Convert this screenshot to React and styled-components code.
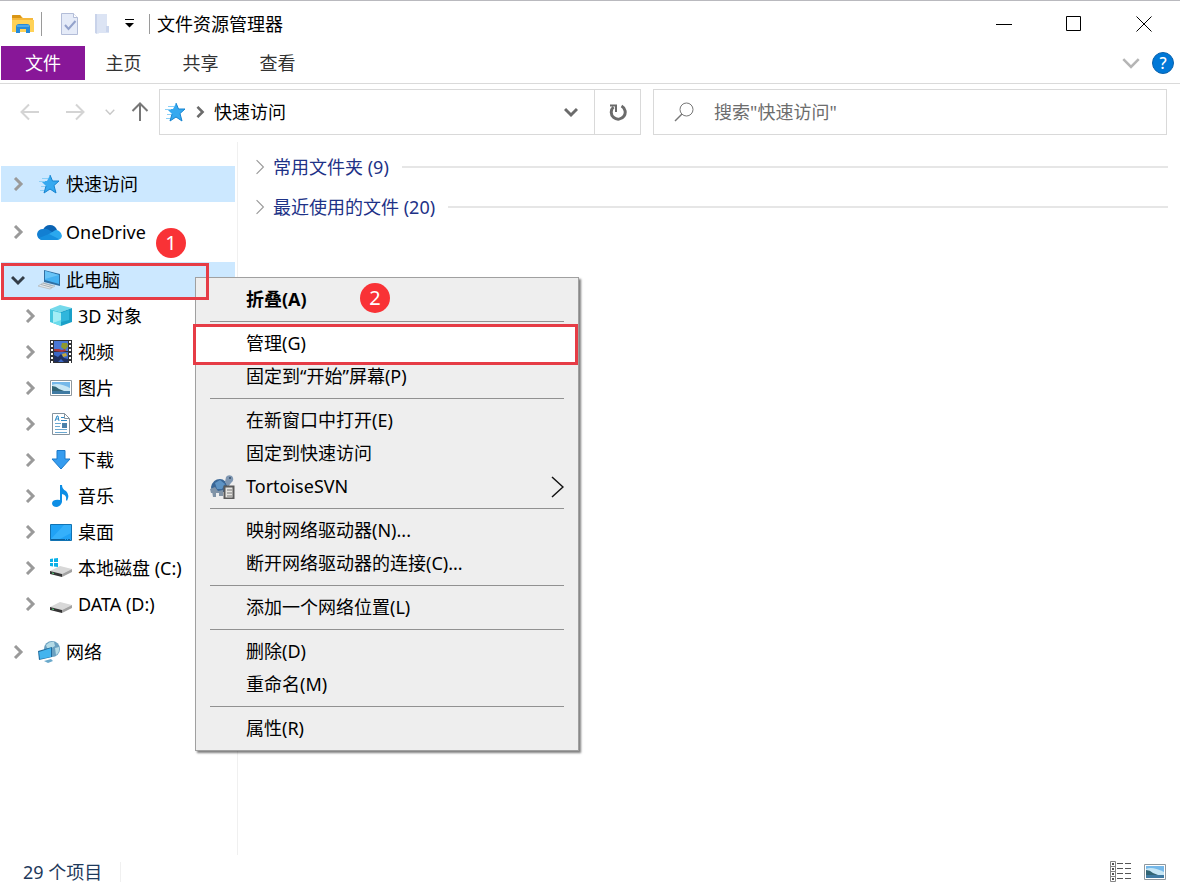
import React from "react";
import styled, { createGlobalStyle } from "styled-components";

const GlobalStyle = createGlobalStyle`
  * {
    box-sizing: border-box;
  }
  body {
    margin: 0;
    background: #fff;
  }
  body,
  button,
  input {
    font-family: "Noto Sans", "Noto Sans CJK SC", sans-serif;
    font-size: 18px;
    color: #000;
  }
  button {
    padding: 0;
    border: 0;
    background: none;
  }
  svg {
    display: block;
    flex: none;
  }
`;

const Window = styled.div`
  position: relative;
  display: flex;
  flex-direction: column;
  min-height: 100vh;
`;

const TitleBar = styled.header`
  display: flex;
  align-items: center;
  height: 46px;
  padding: 0 1px 0 11px;
  border-top: 1px solid #b9b9be;
`;

const QuickAccess = styled.div`
  display: flex;
  align-items: center;
  gap: 14px;
  margin-left: 6px;
  padding-left: 18px;
  border-left: 1px solid #9a9a9a;
`;

const Divider = styled.span`
  width: 1px;
  height: 20px;
  background: #9a9a9a;
`;

const Title = styled.h1`
  flex: 1;
  margin: 0 0 0 7px;
  font-size: 18px;
  line-height: 24px;
  font-weight: 400;
`;

const WindowButton = styled.button`
  display: flex;
  align-items: center;
  justify-content: center;
  width: 70px;
  height: 45px;
`;

const Tabs = styled.nav`
  display: flex;
  align-items: center;
  padding: 0 6px 3px 1px;
  border-bottom: 1px solid #dadada;
`;

const Tab = styled.button`
  width: ${p => (p.$file ? 84 : 77)}px;
  height: 34px;
  line-height: 34px;
  color: ${p => (p.$file ? "#fff" : "#333")};
  background: ${p => (p.$file ? "#881798" : "transparent")};
`;

const RibbonTools = styled.div`
  display: flex;
  align-items: center;
  gap: 12px;
  margin-left: auto;
`;

const HelpButton = styled.button`
  width: 22px;
  height: 22px;
  border-radius: 50%;
  background: #0078d7;
  border: 1px solid #0a62ad;
  color: #fff;
  font-size: 16px;
  line-height: 20px;
  font-weight: 500;
`;

const AddressRow = styled.div`
  display: flex;
  padding: 5px 13px 7px 0;
`;

const History = styled.div`
  display: flex;
  flex: none;
  align-items: center;
  gap: 20px;
  width: 159px;
  padding-left: 20px;
`;

const HistoryGroup = styled.div`
  display: flex;
  align-items: center;
  gap: ${p => p.$gap}px;
`;

const Field = styled.div`
  display: flex;
  flex: ${p => p.$grow} 1 0;
  align-items: center;
  min-width: 0;
  height: 46px;
  border: 1px solid #d9d9d9;
  & + & {
    margin-left: 12px;
  }
`;

const Crumb = styled.button`
  display: flex;
  align-items: center;
  flex: 1;
  gap: 8px;
  padding-left: 4px;
  line-height: 44px;
`;

const FieldButton = styled.button`
  display: flex;
  align-items: center;
  justify-content: center;
  width: 46px;
  height: 44px;
  border-left: ${p => (p.$line ? "1px solid #d9d9d9" : "0")};
`;

const SearchLabel = styled.label`
  display: flex;
  align-items: center;
  width: 100%;
  gap: 20px;
  padding-left: 20px;
`;

const SearchInput = styled.input`
  flex: 1;
  min-width: 0;
  height: 44px;
  padding: 0;
  border: 0;
  outline: 0;
  background: none;
  &::placeholder {
    color: #6d6d6d;
    opacity: 1;
  }
`;

const Body = styled.div`
  display: flex;
  flex: 1;
`;

const Sidebar = styled.nav`
  flex: none;
  width: 238px;
  padding: 24px 2px 0 1px;
  border-right: 1px solid #f0f0f0;
`;

const TreeGroup = styled.div`
  margin-bottom: 12px;
`;

const TreeRow = styled.div`
  position: relative;
  background: ${p => (p.$active ? "#cce8ff" : "transparent")};
`;

const TreeButton = styled.button`
  display: flex;
  align-items: center;
  width: 100%;
  height: 36px;
  padding-left: ${p => (p.$child ? 22 : 10)}px;
  gap: 5px;
  line-height: 36px;
  text-align: left;
  white-space: nowrap;
`;

const TreeIcon = styled.span`
  display: flex;
  justify-content: center;
  width: 24px;
  margin-left: 7px;
`;

const Content = styled.main`
  flex: 1;
  min-width: 0;
  padding: 5px 12px 0 14px;
`;

const GroupHeader = styled.button`
  display: flex;
  align-items: center;
  width: 100%;
  height: 40px;
  gap: 5px;
  color: #1e3287;
  line-height: 40px;
  &::after {
    content: "";
    flex: 1;
    height: 2px;
    margin-left: 8px;
    background: #e6e6e6;
  }
`;

const Menu = styled.div`
  position: absolute;
  left: 195px;
  top: 277px;
  z-index: 1;
  width: 384px;
  padding: 5px 0;
  background: #eee;
  border: 1px solid #a0a0a0;
  box-shadow: 2px 2px 2px rgba(0, 0, 0, 0.5);
`;

const MenuRow = styled.div`
  position: relative;
`;

const MenuItem = styled.button`
  display: grid;
  grid-template-columns: 24px 1fr auto;
  align-items: center;
  column-gap: 12px;
  width: 100%;
  height: 33px;
  padding: 0 14px;
  text-align: left;
  line-height: 33px;
  font-weight: ${p => (p.$bold ? 700 : 400)};
`;

const MenuLine = styled.hr`
  height: 1px;
  margin: 5px 14px;
  border: 0;
  background: #919191;
`;

const Outline = styled.span`
  position: absolute;
  inset: ${p => p.$inset};
  z-index: 2;
  border: 3px solid #e63c46;
  background: ${p => p.$fill || "transparent"};
  pointer-events: none;
`;

const MenuText = styled.span`
  position: relative;
  z-index: 3;
`;

const Badge = styled.span`
  position: absolute;
  left: ${p => p.$left}px;
  top: ${p => p.$top}px;
  z-index: 3;
  width: 30px;
  height: 30px;
  border-radius: 50%;
  background: #f93236;
  color: #fff;
  font-size: 20px;
  line-height: 29px;
  text-align: center;
  pointer-events: none;
`;

const StatusBar = styled.footer`
  display: flex;
  align-items: center;
  height: 36px;
  padding: 0 14px 2px 23px;
  color: #1e395b;
`;

const StatusText = styled.span`
  padding-right: 18px;
  line-height: 20px;
  border-right: 1px solid #f0f0f0;
`;

const ViewButtons = styled.div`
  display: flex;
  align-items: center;
  gap: 12px;
  margin-left: auto;
`;

function Chevron({ down, color = "#9a9a9a", size = 14, weight = 3 }) {
  return (
    <svg width={size} height={size} viewBox="0 0 14 14" fill="none" stroke={color} strokeWidth={weight}>
      <path d={down ? "M1 4l6 6 6-6" : "M4 1l6 6-6 6"} />
    </svg>
  );
}

function Arrow({ turn = 0, color }) {
  return (
    <svg width="20" height="20" viewBox="0 0 20 20" fill="none" stroke={color} strokeWidth="2">
      <path d="M19 10H2M9 2.500L1.500 10 9 17.500" transform={`rotate(${turn} 10 10)`} />
    </svg>
  );
}

function ExplorerIcon() {
  return (
    <svg width="24" height="20" viewBox="0 0 24 20">
      <path d="M1 2q0-1 1-1h7l3 3h10v14H1z" fill="#f5b83b" />
      <path d="M1 2q0-1 1-1h7l2 3H1z" fill="#d99516" />
      <path d="M1 6h22v12H1z" fill="#ffd257" />
      <path d="M5 19v-6q0-3 3-3h8q3 0 3 3v6h-4v-4H9v4z" fill="#278ad8" />
      <path d="M6 11h12v2H6z" fill="#4ba8ea" />
    </svg>
  );
}

function PropertiesIcon() {
  return (
    <svg width="20" height="24" viewBox="0 0 20 24">
      <path d="M1.500 1.500h12l4 4v17h-16z" fill="#e5ebf8" stroke="#b3bdd8" />
      <path d="M13.500 1.500v4h4" fill="#fff" stroke="#b3bdd8" />
      <path d="M5 13l3.500 4 7-8" fill="none" stroke="#93a2cb" strokeWidth="2" />
    </svg>
  );
}

function NewFolderIcon() {
  return (
    <svg width="16" height="22" viewBox="0 0 16 22">
      <path d="M1 1h12v12h2v7H5l-1 1-3-2z" fill="#dce4f4" />
      <path d="M1 1h2v20l-2-1z" fill="#c9d3ea" />
      <path d="M12 13h3v6h-3z" fill="#cbd6ed" />
    </svg>
  );
}

function StarIcon() {
  return (
    <svg width="22" height="20" viewBox="0 0 22 20">
      <path d="M12 1l2.500 6H21l-5 4.500 2 7.500-6-4-6 4 2-7-5-5h6z" fill="#35a9f0" />
      <path d="M12 1l2.500 6H21l-5 4.500 2 7.500-6-4-6 4 2-7" fill="none" stroke="#1684d0" />
      <path d="M4 4.500h6M1 7.500h6M3 12.500h4M2 16.500h4" stroke="#8bcff6" />
    </svg>
  );
}

function OneDriveIcon() {
  return (
    <svg width="25" height="17" viewBox="0 0 25 17">
      <path d="M6 6Q8 1 13 1q5 0 7 5l-5 5z" fill="#0a63b3" />
      <path d="M6 5q3-1 6 1l6 4-8 6H5q-5-1-5-6 1-5 6-5z" fill="#127fd2" />
      <path d="M12 10l5-3q2-2 5 0 3 2 3 5-1 4-5 4H5z" fill="#2ba8ee" />
      <path d="M2 14l10-4 10 5-2 1H5q-2 0-3-2z" fill="#168fdf" />
    </svg>
  );
}

function ComputerIcon() {
  return (
    <svg width="24" height="20" viewBox="0 0 24 20">
      <path d="M7 0l16 4v12L7 12z" fill="#2f6fa3" />
      <path d="M8 1l14 4v9L8 10z" fill="#45b1f2" />
      <path d="M8 1l14 4-14 4z" fill="#68c4f7" />
      <path d="M6 13l12 3-5 3-12-3z" fill="#e5e8ea" stroke="#bcc3c7" />
      <path d="M4 14.500l11 3M6 13l10 3" stroke="#a9b1b6" />
    </svg>
  );
}

function CubeIcon() {
  return (
    <svg width="22" height="22" viewBox="0 0 22 22">
      <path d="M0 4l10-4 12 3-11 4z" fill="#74d9eb" />
      <path d="M0 4l11 3v14L0 17z" fill="#45c6de" />
      <path d="M11 7l11-4v14l-11 4z" fill="#1aa0c8" />
      <path d="M3 6l8 2v8l-8 2z" fill="#a3edf5" />
      <path d="M3 18l8-3v6z" fill="#6adcec" />
      <path d="M11 8l8-3v10l-8 2z" fill="#30b6dc" />
    </svg>
  );
}

function VideoIcon() {
  return (
    <svg width="22" height="24" viewBox="0 0 22 24">
      <path d="M0 0h22v23H0z" fill="#303236" />
      <path d="M4 1h14v10H4z" fill="#4b78d5" />
      <path d="M4 12h14v10H4z" fill="#3c68c6" />
      <path d="M12 3h5l1 3-3 4-4-3z" fill="#8f9b2d" />
      <path d="M4 9h5l3 1 3-1 1 2-4 1-8-1z" fill="#a93843" />
      <path d="M4 15l4 2 3-3 3 4 4 1v3h-4l-3-3-3 3H4z" fill="#20305f" />
      <path d="M12 14l4-1 1 3-4 1z" fill="#c3a93b" />
      <path d="M2 1v22M20 1v22" stroke="#fff" strokeWidth="2" strokeDasharray="2 2" />
    </svg>
  );
}

function PictureIcon() {
  return (
    <svg width="22" height="16" viewBox="0 0 22 16">
      <path d="M.5.5h21v15H.5z" fill="#fff" stroke="#8f989e" />
      <path d="M2 2h18v12H2z" fill="#75b8e9" />
      <path d="M2 5q6-3 18 3v3H2z" fill="#c6e6f5" />
      <path d="M2 6q4 0 7 3l5 2H2z" fill="#326575" />
      <path d="M2 11h18v3H2z" fill="#3f7aa2" />
    </svg>
  );
}

function DocumentIcon() {
  return (
    <svg width="18" height="22" viewBox="0 0 18 22" fill="none">
      <path d="M.5.5h12l5 5v16H.5z" fill="#fff" stroke="#85939e" />
      <path d="M12.500.5v5h5" stroke="#85939e" />
      <path d="M3 8l2-5h1l1 5M4 6h3M9 4.500h3M9 7.500h6" stroke="#2d8bc7" />
      <path d="M3 10.500h6M3 13.500h5M3 16.500h12M3 19.500h12" stroke="#6ba8d1" />
      <path d="M10 10h5v5h-5z" fill="#4a81aa" />
    </svg>
  );
}

function DownloadIcon() {
  return (
    <svg width="20" height="20" viewBox="0 0 20 20">
      <path d="M6 .5h8V9h5l-9 10L1 9h5z" fill="#359cef" stroke="#1b78c8" />
    </svg>
  );
}

function MusicIcon() {
  return (
    <svg width="18" height="22" viewBox="0 0 18 22">
      <path d="M8 0h2q0 4 4 6 4 4 1 10l-1-1q1-5-4-6v8q-1 4-5 5-5 0-5-4 1-4 8-3z" fill="#0d8ee5" />
    </svg>
  );
}

function DesktopIcon() {
  return (
    <svg width="22" height="17" viewBox="0 0 22 17">
      <path d="M.5.5h21v16H.5z" fill="#20a2f5" stroke="#1173b3" />
      <path d="M14 1h7v8L8 16H1v-1z" fill="#35b0fa" />
      <path d="M1 15.500h19" stroke="#0d609a" strokeDasharray="14 1 1 1" />
    </svg>
  );
}

function DiskIcon({ system }) {
  return (
    <svg width="22" height="20" viewBox="0 0 22 20">
      <path d="M0 13l10-5 12 3-10 5z" fill="#d8d8d8" />
      <path d="M0 13l12 3v3L0 16z" fill="#353535" />
      <path d="M12 16l10-5v3l-10 5z" fill="#a3a3a3" />
      <path d="M2 15l2 .5" stroke="#55d47c" />
      {system && <path d="M0 1l3-.5V4H0zM4 .5l4-.5v4H4zM0 5h3v3.500L0 8zM4 5h4v4l-4-.5z" fill="#0bb1e8" />}
    </svg>
  );
}

function NetworkIcon() {
  return (
    <svg width="22" height="22" viewBox="0 0 22 22">
      <circle cx="14" cy="8" r="8" fill="#6aa0c0" />
      <path d="M8 4q4-4 8-3l1 4-5 3-3-1zM17 7l4-1q1 5-3 8z" fill="#b5dbe6" />
      <path d="M0 10l14-4v10L1 19z" fill="#216c9e" />
      <path d="M1 11l12-4v9L2 18z" fill="#43b4ee" />
      <path d="M6 20l7-2 2 2-5 2z" fill="#6aa9cb" />
    </svg>
  );
}

function TortoiseIcon() {
  return (
    <svg width="25" height="24" viewBox="0 0 25 24">
      <path d="M1 12q2-8 9-8 6 0 8 9v4H2z" fill="#3a6797" />
      <path d="M5 8l5-3 5 4-3 5H7z" fill="#5d93c4" />
      <path d="M0 14l5-2 3 4 5-1v3H1z" fill="#7f93a8" />
      <path d="M2 16h4v6H3zM9 16h4v5H9z" fill="#8093a6" />
      <path d="M15 7l1-5q2-3 6-1 3 4-1 7l-3 4z" fill="#7f97b2" />
      <circle cx="20" cy="3" r="1" fill="#334d68" />
      <path d="M14.500 11.500h9v12h-9z" fill="#e6e5e1" stroke="#5b5b5b" strokeWidth="2" />
      <path d="M17 15h5M17 18h5M17 21h5" stroke="#777" />
    </svg>
  );
}

function DetailsIcon() {
  return (
    <svg width="22" height="22" viewBox="0 0 22 22" fill="none" stroke="#555">
      <path d="M.5.5h5v20h-5zM.5 5.500h5M.5 10.500h5M.5 15.500h5" stroke="#858585" />
      <path d="M2 3h2M2 8h2M2 13h2M2 18h2" strokeWidth="2" />
      <path d="M7 2.500h6M15 2.500h6M7 7.500h6M15 7.500h6M7 12.500h6M15 12.500h6M7 17.500h6M15 17.500h6" />
    </svg>
  );
}

const folders = [
  ["3D 对象", <CubeIcon />],
  ["视频", <VideoIcon />],
  ["图片", <PictureIcon />],
  ["文档", <DocumentIcon />],
  ["下载", <DownloadIcon />],
  ["音乐", <MusicIcon />],
  ["桌面", <DesktopIcon />],
  ["本地磁盘 (C:)", <DiskIcon system />],
  ["DATA (D:)", <DiskIcon />],
];

const menuGroups = [
  [{ text: "折叠(A)", bold: true, badge: 2 }],
  [{ text: "管理(G)", hot: true }, { text: "固定到“开始”屏幕(P)" }],
  [
    { text: "在新窗口中打开(E)" },
    { text: "固定到快速访问" },
    { text: "TortoiseSVN", icon: <TortoiseIcon />, submenu: true },
  ],
  [{ text: "映射网络驱动器(N)..." }, { text: "断开网络驱动器的连接(C)..." }],
  [{ text: "添加一个网络位置(L)" }],
  [{ text: "删除(D)" }, { text: "重命名(M)" }],
  [{ text: "属性(R)" }],
];

function TreeItem({ text, icon, child, open, active, children }) {
  return (
    <TreeRow $active={active}>
      <TreeButton $child={child}>
        <Chevron down={open} color={open ? "#333d48" : "#9a9a9a"} />
        <TreeIcon>{icon}</TreeIcon>
        {text}
      </TreeButton>
      {children}
    </TreeRow>
  );
}

function ContextMenu() {
  return (
    <Menu role="menu">
      {menuGroups.map((group, i) => (
        <React.Fragment key={i}>
          {i > 0 && <MenuLine />}
          {group.map(item => (
            <MenuRow key={item.text}>
              {item.hot && <Outline $inset="-3px 0 -5px -3px" $fill="#fff" />}
              <MenuItem role="menuitem" $bold={item.bold}>
                <span>{item.icon}</span>
                <MenuText>{item.text}</MenuText>
                {item.submenu && (
                  <svg width="13" height="22" viewBox="0 0 13 22" fill="none" stroke="#111" strokeWidth="1.500">
                    <path d="M1 1l11 10L1 21" />
                  </svg>
                )}
              </MenuItem>
              {item.badge && <Badge $left={164} $top={0}>{item.badge}</Badge>}
            </MenuRow>
          ))}
        </React.Fragment>
      ))}
    </Menu>
  );
}

export default function App() {
  return (
    <>
      <GlobalStyle />
      <Window>
        <TitleBar>
          <ExplorerIcon />
          <QuickAccess>
            <button aria-label="属性">
              <PropertiesIcon />
            </button>
            <button aria-label="新建文件夹">
              <NewFolderIcon />
            </button>
            <button aria-label="自定义快速访问工具栏">
              <svg width="11" height="9" viewBox="0 0 11 9">
                <path d="M1 .5h9" stroke="#000" />
                <path d="M1 4h9L5.500 8.500z" />
              </svg>
            </button>
            <Divider />
          </QuickAccess>
          <Title>文件资源管理器</Title>
          <WindowButton aria-label="最小化">
            <svg width="16" height="16" stroke="#000">
              <path d="M0 8.500h16" />
            </svg>
          </WindowButton>
          <WindowButton aria-label="最大化">
            <svg width="16" height="16" stroke="#000" fill="none">
              <path d="M.5.5h14v14H.5z" />
            </svg>
          </WindowButton>
          <WindowButton aria-label="关闭">
            <svg width="16" height="16" stroke="#000">
              <path d="M.5.5l15 15M15.500.5l-15 15" />
            </svg>
          </WindowButton>
        </TitleBar>
        <Tabs>
          <Tab $file>文件</Tab>
          <Tab>主页</Tab>
          <Tab>共享</Tab>
          <Tab>查看</Tab>
          <RibbonTools>
            <Chevron down size={18} color="#b5b5b5" weight={2} />
            <HelpButton aria-label="帮助">?</HelpButton>
          </RibbonTools>
        </Tabs>
        <AddressRow>
          <History>
            <HistoryGroup $gap={25}>
              <button aria-label="后退">
                <Arrow color="#d4d4d4" />
              </button>
              <button aria-label="前进">
                <Arrow turn={180} color="#d4d4d4" />
              </button>
            </HistoryGroup>
            <HistoryGroup $gap={15}>
              <button aria-label="最近位置">
                <Chevron down size={10} color="#c8c8c8" weight={2} />
              </button>
              <button aria-label="向上">
                <Arrow turn={90} color="#777" />
              </button>
            </HistoryGroup>
          </History>
          <Field $grow={482}>
            <Crumb>
              <StarIcon />
              <Chevron size={12} color="#6b6b6b" />
              快速访问
            </Crumb>
            <FieldButton aria-label="以前的位置">
              <Chevron down color="#6b6b6b" />
            </FieldButton>
            <FieldButton $line aria-label="刷新">
              <svg width="18" height="18" viewBox="0 0 18 18" fill="none" stroke="#6b6b6b" strokeWidth="3">
                <path d="M12.500 3a7 7 0 1 1-8 1" />
                <path d="M1 2.500h6V9" strokeWidth="2" />
              </svg>
            </FieldButton>
          </Field>
          <Field $grow={514}>
            <SearchLabel>
              <svg width="20" height="20" viewBox="0 0 20 20" fill="none" stroke="#777">
                <circle cx="12.500" cy="7.500" r="6.500" />
                <path d="M8 12l-7 7" strokeWidth="1.500" />
              </svg>
              <SearchInput type="text" aria-label="搜索" placeholder={'搜索"快速访问"'} />
            </SearchLabel>
          </Field>
        </AddressRow>
        <Body>
          <Sidebar>
            <TreeGroup>
              <TreeItem text="快速访问" icon={<StarIcon />} active />
            </TreeGroup>
            <TreeGroup>
              <TreeItem text="OneDrive" icon={<OneDriveIcon />}>
                <Badge $left={155} $top={14}>1</Badge>
              </TreeItem>
            </TreeGroup>
            <TreeGroup>
              <TreeItem text="此电脑" icon={<ComputerIcon />} open active>
                <Outline $inset="1px 26px -2px 0" />
              </TreeItem>
              {folders.map(([text, icon]) => (
                <TreeItem key={text} text={text} icon={icon} child />
              ))}
            </TreeGroup>
            <TreeItem text="网络" icon={<NetworkIcon />} />
          </Sidebar>
          <Content>
            <GroupHeader>
              <Chevron size={16} weight={1} />
              常用文件夹 (9)
            </GroupHeader>
            <GroupHeader>
              <Chevron size={16} weight={1} />
              最近使用的文件 (20)
            </GroupHeader>
          </Content>
        </Body>
        <StatusBar>
          <StatusText>29 个项目</StatusText>
          <ViewButtons>
            <button aria-label="详细信息">
              <DetailsIcon />
            </button>
            <button aria-label="大图标">
              <PictureIcon />
            </button>
          </ViewButtons>
        </StatusBar>
        <ContextMenu />
      </Window>
    </>
  );
}
